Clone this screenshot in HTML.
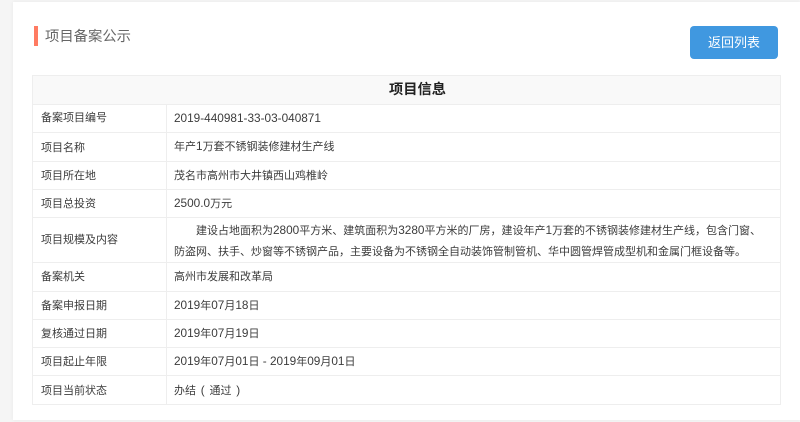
<!DOCTYPE html>
<html lang="zh-CN">
<head>
<meta charset="utf-8">
<title>项目备案公示</title>
<style>
html,body{margin:0;padding:0;width:800px;height:422px;overflow:hidden;background:#f5f5f5;}
body{font-family:"Liberation Sans","Noto Sans CJK SC",sans-serif;color:#444;position:relative;}
.card{position:absolute;left:13px;top:2px;width:787px;height:418px;background:#fff;box-shadow:0 0 4px rgba(0,0,0,.06);}
.bar{position:absolute;left:34px;top:26px;width:4px;height:20px;background:#ff7b62;}
.title{position:absolute;left:45px;top:27px;font-size:14.33px;line-height:20px;color:#666;white-space:nowrap;filter:blur(.3px);}
.btn{position:absolute;left:690px;top:26px;width:88px;height:33px;border-radius:4px;background:#4098e0;color:#fff;font-size:13px;line-height:33px;text-align:center;}
.hline{position:absolute;left:32px;width:748px;height:1px;background:#eee;}
.v{position:absolute;width:1px;background:#eee;}
.head{position:absolute;left:33px;top:76px;width:747px;height:28px;background:#f9f9f9;line-height:28px;font-size:14.25px;font-weight:bold;color:#222;}
.head span{position:absolute;left:356px;top:0;}
.l,.c{position:absolute;font-size:11px;line-height:16px;color:#3c3c3c;white-space:nowrap;filter:blur(.3px);}
.l{left:41px;}
.c{left:174px;}
.n{font-size:11.8px;}
.p{font-size:11.8px;margin:0 1.5px;}
</style>
</head>
<body>
<div class="card"></div>
<div class="bar"></div>
<div class="title">项目备案公示</div>
<div class="btn">返回列表</div>

<div class="head"><span>项目信息</span></div>
<div class="hline" style="top:75px"></div>
<div class="hline" style="top:104px"></div>
<div class="hline" style="top:132px"></div>
<div class="hline" style="top:161px"></div>
<div class="hline" style="top:189px"></div>
<div class="hline" style="top:217px"></div>
<div class="hline" style="top:262px"></div>
<div class="hline" style="top:291px"></div>
<div class="hline" style="top:319px"></div>
<div class="hline" style="top:347px"></div>
<div class="hline" style="top:375px"></div>
<div class="hline" style="top:404px"></div>
<div class="v" style="left:32px;top:75px;height:330px"></div>
<div class="v" style="left:780px;top:75px;height:330px"></div>
<div class="v" style="left:166px;top:104px;height:300px"></div>

<div class="l" style="top:110px">备案项目编号</div>
<div class="c n" style="top:110px">2019-440981-33-03-040871</div>
<div class="l" style="top:140px">项目名称</div>
<div class="c" style="top:138px">年产<span class="n">1</span>万套不锈钢装修建材生产线</div>
<div class="l" style="top:168px">项目所在地</div>
<div class="c" style="top:168px">茂名市高州市大井镇西山鸡椎岭</div>
<div class="l" style="top:196px">项目总投资</div>
<div class="c" style="top:195px"><span class="n">2500.0</span>万元</div>
<div class="l" style="top:232px">项目规模及内容</div>
<div class="c" style="top:222px;left:196px">建设占地面积为<span class="n">2800</span>平方米、建筑面积为<span class="n">3280</span>平方米的厂房，建设年产<span class="n">1</span>万套的不锈钢装修建材生产线，包含门窗、</div>
<div class="c" style="top:244px">防盗网、扶手、炒窗等不锈钢产品，主要设备为不锈钢全自动装饰管制管机、华中圆管焊管成型机和金属门框设备等。</div>
<div class="l" style="top:269px">备案机关</div>
<div class="c" style="top:269px">高州市发展和改革局</div>
<div class="l" style="top:298px">备案申报日期</div>
<div class="c" style="top:297px"><span class="n">2019</span>年<span class="n">07</span>月<span class="n">18</span>日</div>
<div class="l" style="top:326px">复核通过日期</div>
<div class="c" style="top:325px"><span class="n">2019</span>年<span class="n">07</span>月<span class="n">19</span>日</div>
<div class="l" style="top:354px">项目起止年限</div>
<div class="c" style="top:353px"><span class="n">2019</span>年<span class="n">07</span>月<span class="n">01</span>日<span class="n"> - 2019</span>年<span class="n">09</span>月<span class="n">01</span>日</div>
<div class="l" style="top:383px">项目当前状态</div>
<div class="c" style="top:382px">办结<span class="p"> ( </span>通过<span class="p"> )</span></div>
</body>
</html>
